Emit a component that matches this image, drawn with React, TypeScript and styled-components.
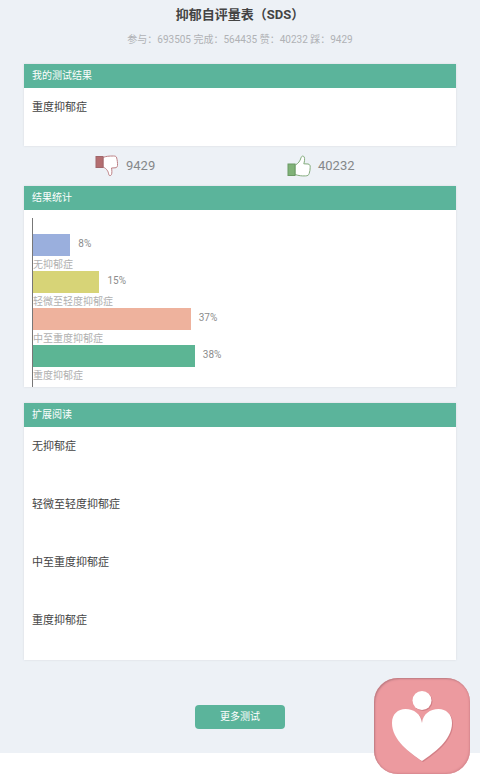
import React from 'react';
import styled, { createGlobalStyle } from 'styled-components';

const GlobalStyle = createGlobalStyle`
  *, *::before, *::after { box-sizing: border-box; }
  body {
    margin: 0;
    background: #fff;
    color: #444;
    font-family: Roboto, "Noto Sans CJK SC", sans-serif;
    font-size: 11px;
    line-height: 16px;
  }
  h1, h2, p, ul, ol { margin: 0; padding: 0; }
  ul, ol { list-style: none; }
`;

const Page = styled.main`
  background: #edf1f6;
  padding: 5px 5% 24px;
`;

const Title = styled.h1`
  font-size: 13px;
  line-height: 20px;
  font-weight: 700;
  text-align: center;
  color: #444;
`;

const Summary = styled.p`
  margin-top: 7px;
  font-size: 10px;
  line-height: 16px;
  text-align: center;
  color: #b0b2b5;
`;

const Card = styled.section<{ $gap?: number }>`
  margin-top: ${(p) => p.$gap ?? 0}px;
  background: #fff;
  box-shadow: 0 0 2px #d5d9de;
`;

const CardTitle = styled.h2`
  padding: 0 8px;
  background: #5bb49b;
  color: #fff;
  font-size: 10px;
  line-height: 24px;
  font-weight: 400;
`;

const Entry = styled.p`
  height: 58px;
  padding: 12px 8px;
`;

const EntryList = styled.ul`
  padding-bottom: 1px;
`;

const Votes = styled.div`
  display: grid;
  grid-template-columns: 192px 192px;
  justify-content: center;
  height: 40px;
`;

const Vote = styled.button`
  display: flex;
  align-items: center;
  gap: 7px;
  padding: 0 0 0 47px;
  border: 0;
  background: none;
  color: #858789;
  font: inherit;
  font-size: 13px;
  cursor: pointer;
`;

const Chart = styled.ol`
  margin: 8px 8px 0;
  padding: 16px 0 5px;
  border-left: 1px solid #777;
`;

const BarLine = styled.div`
  display: flex;
  align-items: center;
  gap: 8px;
  height: 22px;
  color: #8c8c8c;
  font-size: 10px;
`;

const Bar = styled.div<{ $color: string; $share: number }>`
  width: ${(p) => p.$share}%;
  height: 100%;
  background: ${(p) => p.$color};
`;

const Percent = styled.span`
  padding-bottom: 2px;
`;

const BarLabel = styled.div`
  height: 15px;
  color: #b0b0b0;
  font-size: 10px;
  line-height: 17px;
`;

const Actions = styled.div`
  display: flex;
  justify-content: center;
  margin-top: 45px;
`;

const MoreButton = styled.button`
  width: 90px;
  height: 24px;
  padding: 0;
  border: 0;
  border-radius: 4px;
  background: #5bb49b;
  color: #fff;
  font: inherit;
  font-size: 10px;
  cursor: pointer;
`;

const FloatingButton = styled.button`
  position: fixed;
  right: 10px;
  bottom: 10px;
  width: 96px;
  height: 96px;
  padding: 0;
  border: 0;
  border-radius: 24px;
  background: #ec9a9f;
  box-shadow: inset 1px 1px 2px #b97980, inset -1px -1px 2px #d9898f;
  cursor: pointer;

  svg { display: block; }
`;

const results = [
  { name: '无抑郁症', percent: 8, share: 9, color: '#9aafdd' },
  { name: '轻微至轻度抑郁症', percent: 15, share: 16, color: '#d7d477' },
  { name: '中至重度抑郁症', percent: 37, share: 38, color: '#eeb29d' },
  { name: '重度抑郁症', percent: 38, share: 39, color: '#5cb594' },
];

const ThumbDown = () => (
  <svg width="24" height="22" viewBox="0 0 24 22" aria-hidden="true">
    <path d="M8 2.500 C11 1.200 14 1 18.500 1 C20.500 1 21.500 1.500 21.700 3 C22.200 5 22.700 8 22.500 10.500 C22.400 12 21.500 12.800 20 12.800 L16.500 13 C17 15.500 17 18 16.500 19.500 C15.800 21 14 21 13.700 19.300 C13.300 16.500 12 13.800 8 12Z" fill="#fff" stroke="#bd8084" />
    <rect x="1" y="1.500" width="7" height="11" fill="#b46e70" stroke="#a0666a" />
  </svg>
);

const ThumbUp = () => (
  <svg width="24" height="22" viewBox="0 0 24 22" aria-hidden="true">
    <path d="M8 10.200 C11.500 8.500 13 6 14 2.800 C14.500 .8 16.500 .5 17.200 2 C18 4 17.500 6.500 16.800 8.800 L21 9 C22.800 9.200 23.300 10.500 23.200 12.300 C23.200 14.500 22.800 16.500 22.200 18.500 C21.800 20.200 20.500 20.800 18.500 20.900 C14.500 21.100 12 20.700 8 19.500Z" fill="#fff" stroke="#84ac7d" />
    <rect x="1" y="9" width="7" height="11.500" fill="#80b278" stroke="#6b9a64" />
  </svg>
);

const HEART =
  'M48 83 C36 75 18 62 18 45 C18 36 24 31 31.500 31 C40 31 47 36 48 45 C49 36 56 31 64.500 31 C72 31 78 36 78 45 C78 62 60 75 48 83Z';

const HeartPerson = () => (
  <svg width="96" height="96" viewBox="0 0 96 96" aria-hidden="true">
    <g fill="#d27f86" transform="translate(1 1)">
      <circle cx="48" cy="22.500" r="9.500" />
      <path d={HEART} />
    </g>
    <g fill="#fff">
      <circle cx="48" cy="22.500" r="9.500" />
      <path d={HEART} />
    </g>
  </svg>
);

export default function App() {
  return (
    <>
      <GlobalStyle />
      <Page>
        <Title>抑郁自评量表（SDS）</Title>
        <Summary>参与：693505 完成：564435 赞：40232 踩：9429</Summary>

        <Card $gap={16}>
          <CardTitle>我的测试结果</CardTitle>
          <Entry>重度抑郁症</Entry>
        </Card>

        <Votes>
          <Vote type="button" aria-label="踩 9429"><ThumbDown />9429</Vote>
          <Vote type="button" aria-label="赞 40232"><ThumbUp />40232</Vote>
        </Votes>

        <Card>
          <CardTitle>结果统计</CardTitle>
          <Chart>
            {results.map((r) => (
              <li key={r.name}>
                <BarLine>
                  <Bar $color={r.color} $share={r.share} />
                  <Percent>{r.percent}%</Percent>
                </BarLine>
                <BarLabel>{r.name}</BarLabel>
              </li>
            ))}
          </Chart>
        </Card>

        <Card $gap={16}>
          <CardTitle>扩展阅读</CardTitle>
          <EntryList>
            {results.map((r) => (
              <li key={r.name}><Entry>{r.name}</Entry></li>
            ))}
          </EntryList>
        </Card>

        <Actions>
          <MoreButton type="button">更多测试</MoreButton>
        </Actions>
      </Page>
      <FloatingButton type="button" aria-label="首页"><HeartPerson /></FloatingButton>
    </>
  );
}
